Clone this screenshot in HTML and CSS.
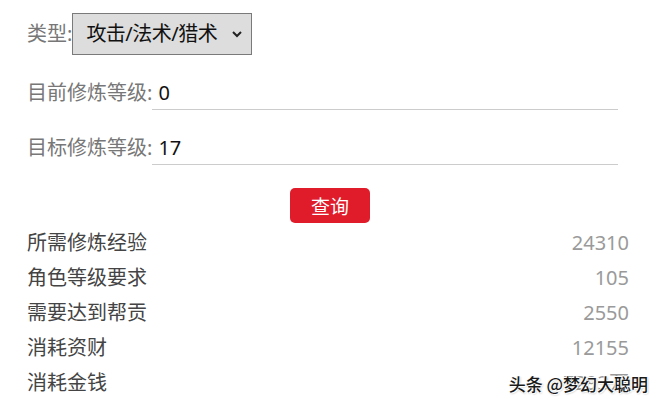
FILE: index.html
```html
<!DOCTYPE html>
<html lang="zh">
<head>
<meta charset="utf-8">
<link rel="stylesheet" href="styles.css">
</head>
<body>
<div class="page">
  <div class="row row-type">
    <span class="label">类型:</span>
    <div class="select">
      <span class="select-text">攻击/法术/猎术</span>
      <svg class="chev" width="12" height="8" viewBox="0 0 12 8"><path d="M2 2 L6 6 L10 2" fill="none" stroke="#222" stroke-width="2"/></svg>
    </div>
  </div>
  <div class="row row-input">
    <span class="label">目前修炼等级:</span>
    <input class="field" type="text" value="0">
  </div>
  <div class="row row-input">
    <span class="label">目标修炼等级:</span>
    <input class="field" type="text" value="17">
  </div>
  <div class="btn-wrap"><button class="btn">查询</button></div>
  <div class="results">
    <div class="res"><span class="res-k">所需修炼经验</span><span class="res-v">24310</span></div>
    <div class="res"><span class="res-k">角色等级要求</span><span class="res-v">105</span></div>
    <div class="res"><span class="res-k">需要达到帮贡</span><span class="res-v">2550</span></div>
    <div class="res"><span class="res-k">消耗资财</span><span class="res-v">12155</span></div>
    <div class="res"><span class="res-k">消耗金钱</span><span class="res-v">7293万</span></div>
  </div>
</div>
<div class="watermark">头条 @梦幻大聪明</div>
</body>
</html>
```
FILE: styles.css
```css
html, body {
  margin: 0;
  padding: 0;
  background: #fff;
}
body {
  width: 660px;
  height: 411px;
  overflow: hidden;
  position: relative;
  font-family: "Noto Sans", "Noto Sans CJK SC", sans-serif;
  font-size: 20px;
}
.page {
  padding: 13px 31px 0 27px;
}
.row {
  display: flex;
  align-items: center;
}
.label {
  color: #777;
  font-size: 20px;
  line-height: 24px;
  white-space: nowrap;
}
.select {
  box-sizing: border-box;
  width: 180px;
  height: 42px;
  margin-left: 0;
  background: #dddddd;
  border: 1px solid #7a7a7a;
  display: flex;
  align-items: center;
  padding: 0 8px 0 13px;
  justify-content: space-between;
}
.select-text {
  color: #111;
  font-size: 20px;
  line-height: 24px;
  letter-spacing: -0.5px;
}
.chev {
  display: block;
}
.row-input {
  margin-top: 21px;
}
.field {
  box-sizing: border-box;
  width: 466px;
  height: 34px;
  border: none;
  border-bottom: 1px solid #cccccc;
  outline: none;
  padding: 0 6px;
  font-family: "Noto Sans", "Noto Sans CJK SC", sans-serif;
  font-size: 20px;
  color: #111;
  background: transparent;
}
.btn-wrap {
  display: flex;
  justify-content: center;
  margin-top: 23px;
  margin-left: -27px;
  margin-right: -31px;
}
.btn {
  width: 80px;
  height: 35px;
  border: none;
  border-radius: 5px;
  background: #e01c2b;
  color: #fff;
  font-family: "Noto Sans CJK SC", sans-serif;
  font-size: 19px;
  line-height: 24px;
  padding: 0;
}
.results {
  margin-top: 2px;
}
.res {
  display: flex;
  justify-content: space-between;
  align-items: center;
  height: 35px;
}
.res-k {
  color: #444;
  font-size: 20px;
  line-height: 24px;
}
.res-v {
  color: #9a9a9a;
  font-size: 20px;
  line-height: 24px;
}
.watermark {
  position: absolute;
  right: 12px;
  top: 373px;
  font-family: "Noto Sans CJK SC", sans-serif;
  font-size: 17px;
  font-weight: 500;
  line-height: 22px;
  color: #1a1a1a;
  text-shadow: 1px 1px 0 #fff, -1px 0 0 #fff, 0 -1px 0 #fff, 1px 1px 2px rgba(0,0,0,0.35);
}
```
